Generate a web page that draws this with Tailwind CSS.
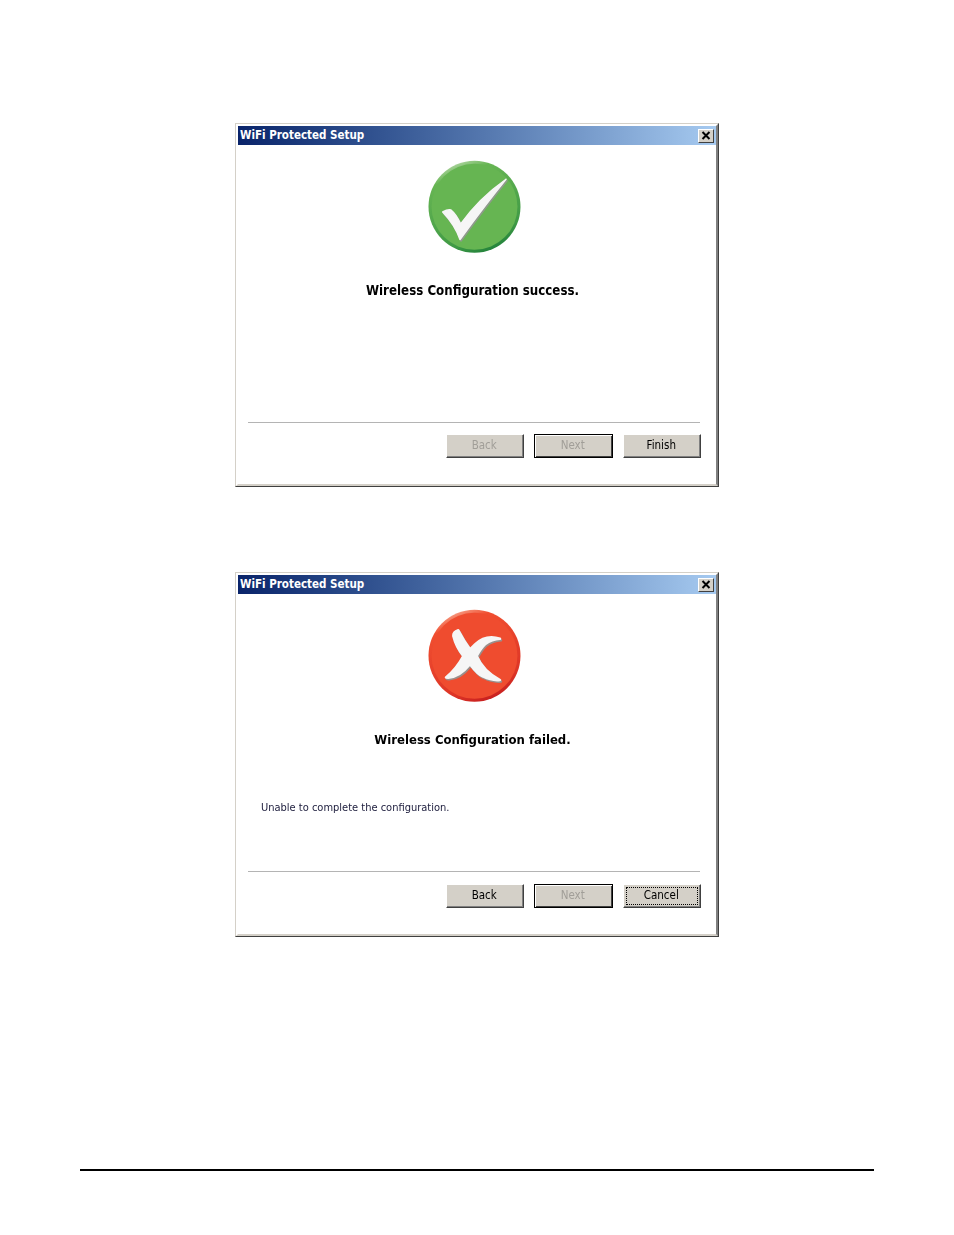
<!DOCTYPE html>
<html lang="en">
<head>
  <meta charset="UTF-8" />
  <title>WiFi Protected Setup</title>
  <script src="https://cdn.jsdelivr.net/npm/@tailwindcss/browser@4"></script>
</head>
<body class="bg-white font-['DejaVu_Sans',sans-serif] font-stretch-condensed">
<div class="w-[954px] h-[1235px] pt-[123px] flex flex-col items-center overflow-hidden">

  <!-- success dialog -->
  <div class="w-[484px] h-[364px] border border-t-[#d4d0c8] border-l-[#d4d0c8] border-r-[#404040] border-b-[#404040] blur-[0.35px]">
    <div class="h-full border-2 border-l-white border-t-white border-r-[#808080] border-b-[#d4d0c8] flex flex-col">
      <div class="h-[19px] bg-gradient-to-r from-[#0a246a] to-[#a6caf0] flex items-center justify-between pl-[2px] pr-[2px] shrink-0">
        <span class="text-white text-[11.5px] font-bold mt-[1px]">WiFi Protected Setup</span>
        <span class="w-[16px] h-[14px] bg-[#d4d0c8] border border-t-white border-l-white border-r-[#404040] border-b-[#404040] flex items-center justify-center">
          <svg width="10" height="9" viewBox="0 0 10 9"><path d="M1.5 1 L8.5 8 M8.5 1 L1.5 8" stroke="#000" stroke-width="2"/></svg>
        </span>
      </div>
      <div class="flex-1 flex flex-col">
        <svg class="ml-[182px] mt-[7px] shrink-0 blur-[0.4px]" width="110" height="110" viewBox="0 0 110 110">
          <defs>
            <linearGradient id="gr" x1="0.3" y1="0" x2="0.7" y2="1"><stop offset="0" stop-color="#b5d8a8"/><stop offset="0.15" stop-color="#67b553"/><stop offset="0.8" stop-color="#3f9a45"/><stop offset="1" stop-color="#1f7f3a"/></linearGradient>
          </defs>
          <circle cx="54.5" cy="54.7" r="46" fill="url(#gr)"/>
          <circle cx="54.5" cy="54.7" r="43" fill="#66b552"/>
          <path d="M22.7 60 Q28 57 31 58 Q36 62 40.7 72 C52 56 68 40 86 27.3 C74 42 60 60 40 87.5 Q35 73 22.7 60 Z" fill="#8f9a8c" stroke="#8f9a8c" stroke-width="1.5" stroke-linejoin="round" transform="translate(1 1.5)"/>
          <path d="M22.7 60 Q28 57 31 58 Q36 62 40.7 72 C52 56 68 40 86 27.3 C74 42 60 60 40 87.5 Q35 73 22.7 60 Z" fill="#f6f6f6" stroke="#f6f6f6" stroke-width="1.5" stroke-linejoin="round"/>
        </svg>
        <h2 class="text-center text-[13.2px] font-bold text-black mt-[21px] ml-[-9px] leading-[16px]">Wireless Configuration success.</h2>
        <div class="mt-auto ml-[10px] w-[452px] h-[1px] bg-[#b4b4b4] shrink-0"></div>
        <div class="flex justify-end gap-[10px] mr-[15px] mt-[11px] mb-[26px] text-[11.5px]">
          <button class="w-[78.5px] h-[24px] pr-[1px] bg-[#d4d0c8] border border-t-white border-l-white border-r-[#404040] border-b-[#404040] shadow-[inset_-1px_-1px_0_#808080] text-[#a19e98]">Back</button>
          <button class="w-[78.5px] h-[24px] pr-[1px] bg-[#d4d0c8] border border-black shadow-[inset_1px_1px_0_#fff,inset_-1px_-1px_0_#404040] text-[#a19e98]">Next</button>
          <button class="w-[78.5px] h-[24px] pr-[1px] bg-[#d4d0c8] border border-t-white border-l-white border-r-[#404040] border-b-[#404040] shadow-[inset_-1px_-1px_0_#808080] text-black">Finish</button>
        </div>
      </div>
    </div>
  </div>

  <!-- failed dialog -->
  <div class="w-[484px] h-[365px] mt-[85px] border border-t-[#d4d0c8] border-l-[#d4d0c8] border-r-[#404040] border-b-[#404040] blur-[0.35px]">
    <div class="h-full border-2 border-l-white border-t-white border-r-[#808080] border-b-[#d4d0c8] flex flex-col">
      <div class="h-[19px] bg-gradient-to-r from-[#0a246a] to-[#a6caf0] flex items-center justify-between pl-[2px] pr-[2px] shrink-0">
        <span class="text-white text-[11.5px] font-bold mt-[1px]">WiFi Protected Setup</span>
        <span class="w-[16px] h-[14px] bg-[#d4d0c8] border border-t-white border-l-white border-r-[#404040] border-b-[#404040] flex items-center justify-center">
          <svg width="10" height="9" viewBox="0 0 10 9"><path d="M1.5 1 L8.5 8 M8.5 1 L1.5 8" stroke="#000" stroke-width="2"/></svg>
        </span>
      </div>
      <div class="flex-1 flex flex-col">
        <svg class="ml-[182px] mt-[7px] shrink-0 blur-[0.4px]" width="110" height="110" viewBox="0 0 110 110">
          <defs>
            <linearGradient id="rd" x1="0.3" y1="0" x2="0.7" y2="1"><stop offset="0" stop-color="#f7a78f"/><stop offset="0.15" stop-color="#f04e30"/><stop offset="0.8" stop-color="#dd3526"/><stop offset="1" stop-color="#c41c1e"/></linearGradient>
          </defs>
          <circle cx="54.5" cy="54.7" r="46" fill="url(#rd)"/>
          <circle cx="54.5" cy="54.7" r="43" fill="#ef4c2f"/>
          <path d="M38.3 29.3 Q33 31 33.3 35 Q36 46 43.3 55 Q37 67 26 76.5 Q38 78 50 63.3 Q58 74 63 75.5 Q72 80 80 79 Q63 70 56.7 55 Q61 47 65 43.3 Q72 38 80 37.7 Q66 33 55 43.3 L50 48.3 Q44 40 38.3 29.3 Z" fill="#9a8f8c" stroke="#9a8f8c" stroke-width="2.5" stroke-linejoin="round" transform="translate(1 1.5)"/>
          <path d="M38.3 29.3 Q33 31 33.3 35 Q36 46 43.3 55 Q37 67 26 76.5 Q38 78 50 63.3 Q58 74 63 75.5 Q72 80 80 79 Q63 70 56.7 55 Q61 47 65 43.3 Q72 38 80 37.7 Q66 33 55 43.3 L50 48.3 Q44 40 38.3 29.3 Z" fill="#f6f6f6" stroke="#f6f6f6" stroke-width="2.5" stroke-linejoin="round"/>
        </svg>
        <h2 class="text-center text-[13px] font-bold text-black mt-[21px] ml-[-9px] leading-[16px]">Wireless Configuration failed.</h2>
        <p class="ml-[23px] mt-[53px] text-[11px] leading-[14px] text-[#1c1c3c]">Unable to complete the configuration.</p>
        <div class="mt-auto ml-[10px] w-[452px] h-[1px] bg-[#b4b4b4] shrink-0"></div>
        <div class="flex justify-end gap-[10px] mr-[15px] mt-[12px] mb-[26px] text-[11.5px]">
          <button class="w-[78.5px] h-[24px] pr-[1px] bg-[#d4d0c8] border border-t-white border-l-white border-r-[#404040] border-b-[#404040] shadow-[inset_-1px_-1px_0_#808080] text-black">Back</button>
          <button class="w-[78.5px] h-[24px] pr-[1px] bg-[#d4d0c8] border border-black shadow-[inset_1px_1px_0_#fff,inset_-1px_-1px_0_#404040] text-[#a19e98]">Next</button>
          <button class="w-[78.5px] h-[24px] bg-[#d4d0c8] border border-t-white border-l-white border-r-[#404040] border-b-[#404040] shadow-[inset_-1px_-1px_0_#808080] text-black p-[2px]">
            <span class="w-full h-full pr-[1px] flex items-center justify-center border border-dotted border-black">Cancel</span>
          </button>
        </div>
      </div>
    </div>
  </div>

  <div class="w-[794px] h-[2px] bg-black mt-[232px] shrink-0"></div>
</div>
</body>
</html>
